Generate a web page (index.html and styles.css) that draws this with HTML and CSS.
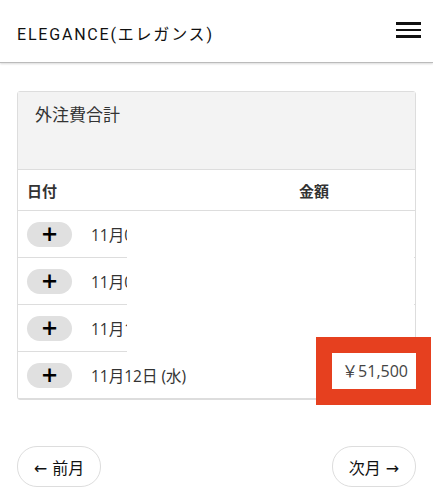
FILE: index.html
```html
<!DOCTYPE html>
<html lang="ja">
<head>
    <meta charset="UTF-8">
    <meta name="viewport" content="width=device-width, initial-scale=1.0">
    <link rel="stylesheet" href="styles.css">
    <title>ELEGANCE</title>
</head>
<body>
    <div class="header">
        <div class="title">ELEGANCE(エレガンス)</div>
        <div class="menu">
            <span></span><span></span><span></span>
        </div>
    </div>

    <div class="content">
        <div class="card">
            <div class="card-header">外注費合計</div>
            <div class="row head">
                <div class="col-date">日付</div>
                <div class="col-amount">金額</div>
            </div>
            <div class="row">
                <button class="plus">+</button>
                <div class="col-date">11月05日 (水)</div>
                <div class="col-amount"></div>
            </div>
            <div class="row">
                <button class="plus">+</button>
                <div class="col-date">11月08日 (土)</div>
                <div class="col-amount"></div>
            </div>
            <div class="row">
                <button class="plus">+</button>
                <div class="col-date">11月10日 (月)</div>
                <div class="col-amount"></div>
            </div>
            <div class="row">
                <button class="plus">+</button>
                <div class="col-date">11月12日 (水)</div>
                <div class="col-amount"></div>
            </div>

            <div class="mask"></div>
            <div class="highlight">
                <div class="highlight-inner">￥51,500</div>
            </div>
        </div>

        <div class="nav">
            <button class="nav-btn">← 前月</button>
            <button class="nav-btn">次月 →</button>
        </div>
    </div>
</body>
</html>
```

FILE: styles.css
```css
* {
    box-sizing: border-box;
}

body {
    margin: 0;
    background-color: #fff;
    font-family: "Open Sans", "Noto Sans CJK JP", sans-serif;
    color: #333;
}

.header {
    display: flex;
    justify-content: space-between;
    align-items: center;
    height: 63px;
    padding: 0 12px 0 17px;
    border-bottom: 1px solid #bbb;
    box-shadow: 0 1px 2px rgba(0, 0, 0, 0.15);
}

.title {
    font-family: Roboto, "Noto Sans CJK JP", sans-serif;
    font-size: 16px;
    letter-spacing: 1.8px;
    color: #111;
    padding-top: 4px;
}

.menu {
    display: flex;
    flex-direction: column;
    gap: 4px;
    width: 25px;
    margin-bottom: 2px;
}

.menu span {
    display: block;
    height: 2.5px;
    background-color: #111;
}

.content {
    padding: 28px 17px 0 17px;
}

.card {
    position: relative;
    border: 1px solid #ddd;
    border-radius: 3px;
}

.card-header {
    height: 78px;
    padding: 9px 17px;
    background-color: #f3f3f3;
    border-bottom: 1px solid #ddd;
    font-size: 17px;
    color: #333;
}

.row {
    display: flex;
    align-items: center;
    height: 47px;
    padding-left: 9px;
    border-bottom: 1px solid #ddd;
    font-size: 15.5px;
}

.row:last-of-type {
    border-bottom: none;
    height: 46px;
}

.row.head {
    height: 41px;
    font-weight: bold;
    font-size: 15px;
    color: #333;
}

.row.head .col-date {
    width: 272px;
}

.plus {
    width: 45px;
    height: 25px;
    margin-right: 19px;
    border: none;
    border-radius: 13px;
    background-color: #e0e0e0;
    font-family: "DejaVu Sans", sans-serif;
    font-weight: bold;
    font-size: 21px;
    line-height: 25px;
    color: #000;
    padding: 0;
}

.col-date {
    color: #333;
}

.mask {
    position: absolute;
    left: 109px;
    top: 121px;
    width: 287px;
    height: 139px;
    background-color: #fff;
}

.highlight {
    position: absolute;
    left: 298px;
    top: 245px;
    width: 115px;
    height: 68px;
    border: 16px solid #e6401f;
    border-right-width: 15px;
    background-color: #fff;
}

.highlight-inner {
    text-align: right;
    padding-right: 8px;
    font-size: 16px;
    line-height: 36px;
    color: #444;
}

.nav {
    display: flex;
    justify-content: space-between;
    margin-top: 46px;
}

.nav-btn {
    width: 84px;
    height: 41px;
    border: 1px solid #ddd;
    border-radius: 20px;
    background-color: #fff;
    font-family: "DejaVu Sans", "Noto Sans CJK JP", sans-serif;
    font-size: 16px;
    color: #111;
    padding: 0;
}
```
